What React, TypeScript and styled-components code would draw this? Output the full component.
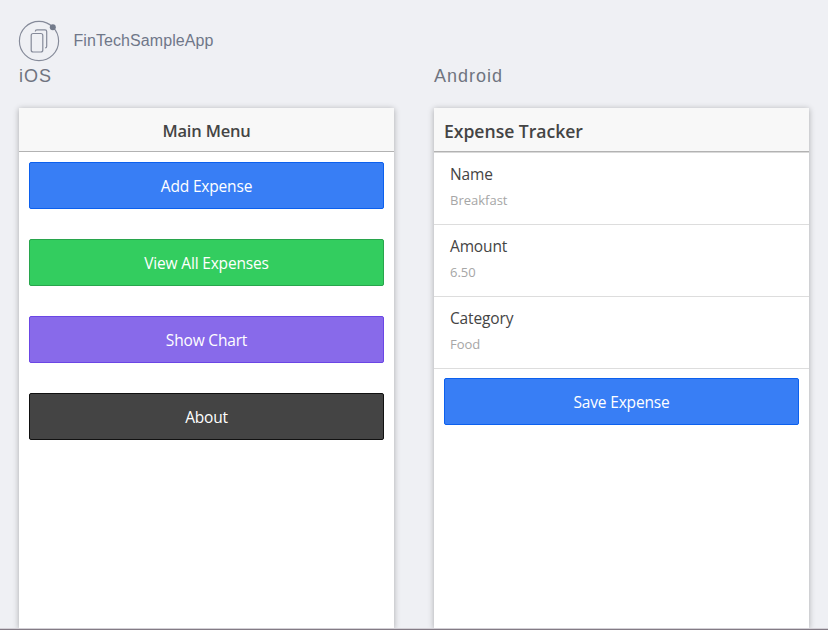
import React from "react";
import styled, { createGlobalStyle } from "styled-components";

const GlobalStyle = createGlobalStyle`
  * { box-sizing: border-box; }
  body { margin: 0; background: #eff0f4; }
`;

const Page = styled.div`
  width: 828px;
  height: 630px;
  overflow: hidden;
  display: flex;
  flex-direction: column;
  background: #eff0f4;
  border-bottom: 1px solid #837b85;
  font-family: "Open Sans", "Noto Sans", sans-serif;
`;

const Brand = styled.header`
  display: flex;
  align-items: center;
  gap: 13.5px;
  height: 42px;
  margin: 20px 0 0 18px;
  color: #6f7789;
  font: 16px/20px "Liberation Sans", Arial, sans-serif;
  letter-spacing: 0.08px;
  svg { display: block; }
`;

const BrandName = styled.span`
  padding-bottom: 1px;
`;

const Previews = styled.main`
  display: grid;
  grid-template-columns: 375px 375px;
  column-gap: 40px;
  padding-left: 19px;
  flex: 1;
  border-bottom: 1px solid #d3d0d6;
`;

const Preview = styled.section`
  display: flex;
  flex-direction: column;
`;

const Platform = styled.h2`
  margin: 0;
  height: 46px;
  padding-top: 3px;
  color: #6f7480;
  font: 400 18px/22px "Liberation Sans", Arial, sans-serif;
  letter-spacing: 1px;
`;

const Screen = styled.div`
  flex: 1;
  background: #fff;
  box-shadow: 0 1px 6px rgba(0, 0, 0, 0.3);
  clip-path: inset(-12px -12px 0 -12px);
`;

const TitleBar = styled.div<{ $android?: boolean }>`
  height: 44px;
  padding: ${(p) => (p.$android ? "0 10px" : "0")};
  background: #f8f8f8;
  border-bottom: 1px solid #b2b2b2;
  color: #444;
  font-size: ${(p) => (p.$android ? "17.6px" : "16.5px")};
  font-weight: 600;
  line-height: 46px;
  text-align: ${(p) => (p.$android ? "left" : "center")};
  letter-spacing: ${(p) => (p.$android ? "-0.03px" : "-0.2px")};
`;

const Menu = styled.div`
  display: flex;
  flex-direction: column;
  gap: 30px;
  padding: 10px;
`;

const Button = styled.button<{ $fill: string; $edge: string }>`
  display: block;
  width: 100%;
  height: 47px;
  padding: 2px 0 0;
  border: 1px solid ${(p) => p.$edge};
  border-radius: 2px;
  background: ${(p) => p.$fill};
  color: #fff;
  font: 400 15.5px/43px "Open Sans", "Noto Sans", sans-serif;
  letter-spacing: -0.18px;
`;

const FieldList = styled.div`
  border-top: 1px solid #d9d9d9;
`;

const Field = styled.div`
  height: 72px;
  padding: 9px 16px 0;
  border-bottom: 1px solid #ddd;
`;

const FieldLabel = styled.div`
  color: #444;
  font-size: 15.5px;
  line-height: 24px;
  letter-spacing: -0.15px;
`;

const FieldValue = styled.div`
  padding-top: 3px;
  color: #a6a6a6;
  font-size: 13px;
  line-height: 22px;
`;

const FormAction = styled.div`
  padding: 9px 10px;
`;

const AppIcon = () => (
  <svg width="42" height="42" viewBox="0 0 42 42" fill="none" stroke="#858a99">
    <circle cx="21" cy="21" r="19.6" strokeWidth="1.15" />
    <rect x="13.2" y="13.5" width="11.6" height="18.5" rx="2" strokeWidth="1.2" />
    <path d="M17.3 11.5c0-1 .8-1.7 1.7-1.7h8c1 0 1.7.8 1.7 1.7v14.7c0 1-.6 1.7-1.5 1.7" strokeWidth="1.2" />
    <circle cx="34.8" cy="7.2" r="3" fill="#737b8b" stroke="none" />
  </svg>
);

const menuItems = [
  { label: "Add Expense", fill: "#387ef5", edge: "#0c60ee" },
  { label: "View All Expenses", fill: "#33cd5f", edge: "#28a54c" },
  { label: "Show Chart", fill: "#886aea", edge: "#6b46e5" },
  { label: "About", fill: "#444", edge: "#111" },
];

const fields = [
  { label: "Name", value: "Breakfast" },
  { label: "Amount", value: "6.50" },
  { label: "Category", value: "Food" },
];

export default function App() {
  return (
    <>
      <GlobalStyle />
      <Page>
        <Brand>
          <AppIcon />
          <BrandName>FinTechSampleApp</BrandName>
        </Brand>
        <Previews>
          <Preview>
            <Platform>iOS</Platform>
            <Screen>
              <TitleBar>Main Menu</TitleBar>
              <Menu>
                {menuItems.map((item) => (
                  <Button key={item.label} $fill={item.fill} $edge={item.edge}>
                    {item.label}
                  </Button>
                ))}
              </Menu>
            </Screen>
          </Preview>
          <Preview>
            <Platform>Android</Platform>
            <Screen>
              <TitleBar $android>Expense Tracker</TitleBar>
              <FieldList>
                {fields.map((field) => (
                  <Field key={field.label}>
                    <FieldLabel>{field.label}</FieldLabel>
                    <FieldValue>{field.value}</FieldValue>
                  </Field>
                ))}
              </FieldList>
              <FormAction>
                <Button $fill="#387ef5" $edge="#0c60ee">Save Expense</Button>
              </FormAction>
            </Screen>
          </Preview>
        </Previews>
      </Page>
    </>
  );
}
